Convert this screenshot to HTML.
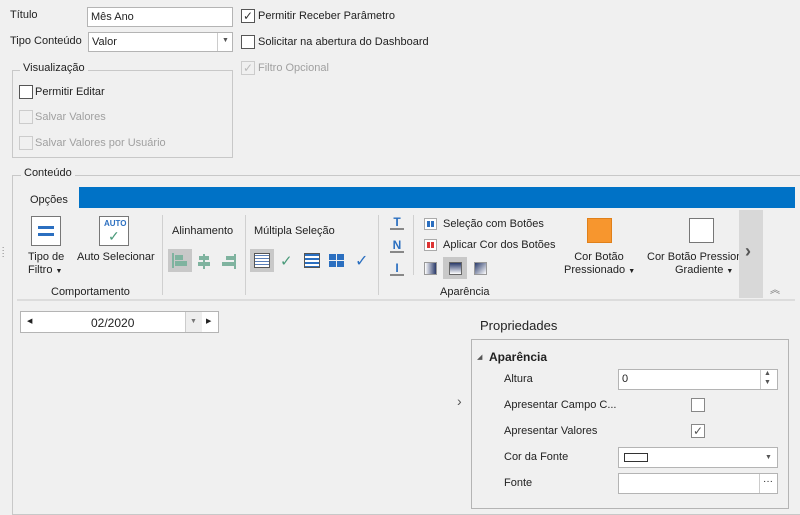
<!DOCTYPE html>
<html><head><meta charset="utf-8"><style>
*{box-sizing:border-box;margin:0;padding:0}
body{width:800px;height:498px;background:#f0f0f0;font-family:"Liberation Sans",sans-serif;font-size:11px;color:#222;position:relative;overflow:hidden}
.a{position:absolute;white-space:nowrap}
.box{position:absolute;background:#fff;border:1px solid #b4b4b4}
.cb{position:absolute;width:14px;height:14px;border:1px solid #555;background:#fff}
.cb.d{border-color:#ccc;background:#f0f0f0}
.dis{color:#a0a0a0}
.grp{position:absolute;border:1px solid #c8c8c8}
.sep{position:absolute;width:1px;background:#d0d0d0}
.hl{position:absolute;background:#c8c8c8}
.ck{position:absolute;font-size:12px;line-height:12px}
</style></head><body>
<div class="a" style="left:10px;top:9px">Título</div>
<div class="box" style="left:87px;top:7px;width:146px;height:20px"><span class="a" style="left:3px;top:3px">Mês Ano</span></div>
<div class="a" style="left:10px;top:35px">Tipo Conteúdo</div>
<div class="box" style="left:88px;top:32px;width:145px;height:20px"><span class="a" style="left:3px;top:3px">Valor</span><div style="position:absolute;left:128px;top:0;width:1px;height:18px;background:#ccc"></div><span class="a" style="left:133px;top:4px;font-size:7px;color:#555">▼</span></div>
<div class="cb" style="left:241px;top:9px"><span class="ck" style="left:1px;top:0;color:#333">✓</span></div>
<div class="a" style="left:258px;top:10px">Permitir Receber Parâmetro</div>
<div class="cb" style="left:241px;top:35px"></div>
<div class="a" style="left:258px;top:36px">Solicitar na abertura do Dashboard</div>
<div class="cb d" style="left:241px;top:61px"><span class="ck" style="left:1px;top:0;color:#bbb">✓</span></div>
<div class="a dis" style="left:258px;top:62px">Filtro Opcional</div>
<div class="grp" style="left:12px;top:70px;width:221px;height:88px"></div>
<div class="a" style="left:20px;top:62px;background:#f0f0f0;padding:0 3px">Visualização</div>
<div class="cb" style="left:19px;top:85px"></div>
<div class="a" style="left:35px;top:86px">Permitir Editar</div>
<div class="cb d" style="left:19px;top:110px"></div>
<div class="a dis" style="left:35px;top:111px">Salvar Valores</div>
<div class="cb d" style="left:19px;top:136px"></div>
<div class="a dis" style="left:35px;top:137px">Salvar Valores por Usuário</div>

<div class="grp" style="left:12px;top:175px;width:800px;height:340px"></div>
<div class="a" style="left:21px;top:167px;background:#f0f0f0;padding:0 3px">Conteúdo</div>
<div class="a" style="left:30px;top:194px">Opções</div>
<div class="a" style="left:79px;top:187px;width:716px;height:21px;background:#0072c6"></div>
<div class="a" style="left:17px;top:299px;width:778px;height:2px;background:#dcdcdc"></div>
<div class="a" style="left:2px;top:244px;font-size:8px;line-height:3px;color:#555">.<br>.<br>.<br>.</div>

<div class="a" style="left:31px;top:216px;width:30px;height:30px;border:1px solid #777;background:#fff"><div class="a" style="left:6px;top:9px;width:16px;height:3px;background:#2b6fc0"></div><div class="a" style="left:6px;top:16px;width:16px;height:3px;background:#2b6fc0"></div></div>
<div class="a" style="left:28px;top:251px;line-height:13px">Tipo de<br>Filtro <span style="font-size:7px">▼</span></div>
<div class="a" style="left:99px;top:216px;width:30px;height:30px;border:1px solid #777;background:#fff"><span class="a" style="left:4px;top:2px;font-size:8px;font-weight:bold;color:#2b6fc0">AUTO</span><span class="a" style="left:8px;top:11px;font-size:14px;color:#4a9a7a">✓</span></div>
<div class="a" style="left:77px;top:251px">Auto Selecionar</div>
<div class="a" style="left:51px;top:286px">Comportamento</div>
<div class="sep" style="left:162px;top:215px;height:80px"></div>
<div class="a" style="left:172px;top:225px">Alinhamento</div>
<div class="hl" style="left:168px;top:249px;width:24px;height:23px"></div>
<div class="a" style="left:172px;top:253px;width:2px;height:15px;background:#7fb39f"></div>
<div class="a" style="left:175px;top:255px;width:8px;height:5px;background:#7fb39f"></div>
<div class="a" style="left:175px;top:261px;width:12px;height:5px;background:#7fb39f"></div>
<div class="a" style="left:203px;top:254px;width:2px;height:15px;background:#7fb39f"></div>
<div class="a" style="left:199px;top:256px;width:10px;height:4px;background:#7fb39f"></div>
<div class="a" style="left:198px;top:262px;width:12px;height:4px;background:#7fb39f"></div>
<div class="a" style="left:234px;top:254px;width:2px;height:15px;background:#7fb39f"></div>
<div class="a" style="left:226px;top:256px;width:8px;height:4px;background:#7fb39f"></div>
<div class="a" style="left:222px;top:262px;width:12px;height:4px;background:#7fb39f"></div>
<div class="sep" style="left:245px;top:215px;height:80px"></div>
<div class="a" style="left:254px;top:225px">Múltipla Seleção</div>
<div class="hl" style="left:250px;top:249px;width:24px;height:23px"></div>
<div class="a" style="left:254px;top:253px;width:16px;height:15px;border:1px solid #555;background:repeating-linear-gradient(#fff 0 1px,#5a7fb8 1px 2px,#fff 2px 3px)"></div>
<div class="a" style="left:280px;top:252px;font-size:15px;color:#4a9a7a">✓</div>
<div class="a" style="left:304px;top:253px;width:16px;height:15px;border:1px solid #555;background:repeating-linear-gradient(#2b6fc0 0 2px,#fff 2px 4px)"></div>
<div class="a" style="left:329px;top:254px;width:7px;height:6px;background:#2b6fc0"></div><div class="a" style="left:337px;top:254px;width:7px;height:6px;background:#2b6fc0"></div>
<div class="a" style="left:329px;top:261px;width:7px;height:6px;background:#2b6fc0"></div><div class="a" style="left:337px;top:261px;width:7px;height:6px;background:#2b6fc0"></div>
<div class="a" style="left:355px;top:251px;font-size:16px;color:#2b6fc0">✓</div>
<div class="sep" style="left:378px;top:215px;height:80px"></div>
<div class="a" style="left:390px;top:216px;width:14px;height:14px;border-bottom:2px solid #888;color:#2b6fc0;font-weight:bold;font-size:12px;text-align:center;line-height:12px">T</div>
<div class="a" style="left:390px;top:239px;width:14px;height:14px;border-bottom:2px solid #888;color:#2b6fc0;font-weight:bold;font-size:12px;text-align:center;line-height:12px">N</div>
<div class="a" style="left:390px;top:262px;width:14px;height:14px;border-bottom:2px solid #888;color:#2b6fc0;font-weight:bold;font-size:12px;text-align:center;line-height:12px">I</div>
<div class="sep" style="left:413px;top:215px;height:60px"></div>
<div class="a" style="left:424px;top:218px;width:13px;height:12px;border:1px solid #aaa;background:#fff"><div class="a" style="left:2px;top:2px;width:7px;height:6px;background:repeating-linear-gradient(90deg,#2b6fc0 0 3px,#fff 3px 4px)"></div></div>
<div class="a" style="left:443px;top:218px">Seleção com Botões</div>
<div class="a" style="left:424px;top:239px;width:13px;height:12px;border:1px solid #aaa;background:#fff"><div class="a" style="left:2px;top:2px;width:7px;height:6px;background:repeating-linear-gradient(90deg,#d33 0 3px,#fff 3px 4px)"></div></div>
<div class="a" style="left:443px;top:239px">Aplicar Cor dos Botões</div>
<div class="a" style="left:424px;top:262px;width:13px;height:13px;border:1px solid #999;background:linear-gradient(90deg,#fff,#2a3a6a)"></div>
<div class="hl" style="left:443px;top:257px;width:24px;height:22px"></div>
<div class="a" style="left:449px;top:262px;width:13px;height:13px;border:1px solid #666;background:linear-gradient(#2a3a6a,#fff)"></div>
<div class="a" style="left:474px;top:262px;width:13px;height:13px;border:1px solid #999;background:linear-gradient(135deg,#2a3a6a,#fff)"></div>
<div class="a" style="left:440px;top:286px">Aparência</div>
<div class="a" style="left:587px;top:218px;width:25px;height:25px;background:#f7962e;border:1px solid #e0801a"></div>
<div class="a" style="left:564px;top:251px;width:70px;text-align:center;line-height:13px">Cor Botão<br>Pressionado <span style="font-size:7px">▼</span></div>
<div class="a" style="left:689px;top:218px;width:25px;height:25px;background:#fff;border:1px solid #777"></div>
<div class="a" style="left:647px;top:251px;width:92px;overflow:hidden;line-height:13px">Cor Botão Pressionado</div>
<div class="a" style="left:675px;top:264px">Gradiente <span style="font-size:7px">▼</span></div>
<div class="a" style="left:739px;top:210px;width:24px;height:88px;background:#d8d8d8"></div>
<div class="a" style="left:745px;top:241px;font-size:18px;font-weight:bold;color:#555">›</div>
<div class="a" style="left:770px;top:281px;font-size:10px;color:#777">︽</div>

<div class="box" style="left:20px;top:311px;width:199px;height:22px"><span class="a" style="left:6px;top:5px;font-size:7px">◀</span><span class="a" style="left:70px;top:4px;font-size:12px">02/2020</span><div class="a" style="left:164px;top:0;width:1px;height:20px;background:#ccc"></div><div class="a" style="left:165px;top:0;width:16px;height:20px;background:#eee"></div><span class="a" style="left:169px;top:6px;font-size:7px;color:#777">▼</span><span class="a" style="left:185px;top:5px;font-size:7px">▶</span></div>

<div class="a" style="left:457px;top:393px;font-size:14px;color:#555">›</div>
<div class="a" style="left:480px;top:318px;font-size:13px">Propriedades</div>
<div class="a" style="left:471px;top:339px;width:318px;height:170px;border:1px solid #b4b4b4"></div>
<div class="a" style="left:477px;top:353px;font-size:7px;color:#555">◢</div>
<div class="a" style="left:489px;top:350px;font-weight:bold;font-size:12px">Aparência</div>
<div class="a" style="left:504px;top:373px">Altura</div>
<div class="box" style="left:618px;top:369px;width:160px;height:21px"><span class="a" style="left:3px;top:3px">0</span><div class="a" style="left:141px;top:0;width:1px;height:19px;background:#ccc"></div><span class="a" style="left:145px;top:0;font-size:7px;color:#555">▲</span><span class="a" style="left:145px;top:9px;font-size:7px;color:#555">▼</span></div>
<div class="a" style="left:504px;top:399px">Apresentar Campo C...</div>
<div class="cb" style="left:691px;top:398px;border-color:#888"></div>
<div class="a" style="left:504px;top:425px">Apresentar Valores</div>
<div class="cb" style="left:691px;top:424px;border-color:#888"><span class="ck" style="left:1px;top:0;color:#555">✓</span></div>
<div class="a" style="left:504px;top:451px">Cor da Fonte</div>
<div class="box" style="left:618px;top:447px;width:160px;height:21px"><div class="a" style="left:5px;top:5px;width:24px;height:9px;border:1px solid #333"></div><span class="a" style="left:146px;top:6px;font-size:7px;color:#555">▼</span></div>
<div class="a" style="left:504px;top:477px">Fonte</div>
<div class="box" style="left:618px;top:473px;width:160px;height:21px"><div class="a" style="left:140px;top:0;width:1px;height:19px;background:#ccc"></div><span class="a" style="left:144px;top:2px;font-size:10px">···</span></div>
</body></html>
